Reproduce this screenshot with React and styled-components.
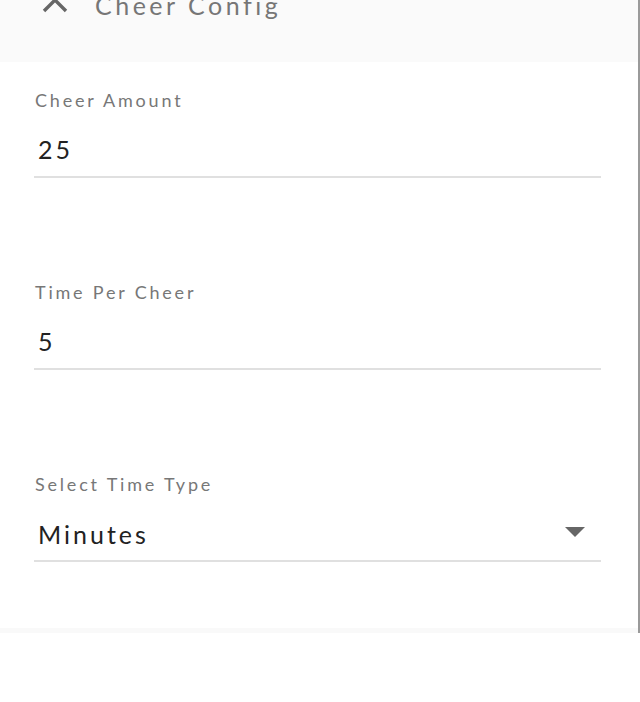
import React from 'react';
import styled, { createGlobalStyle } from 'styled-components';

const GlobalStyle = createGlobalStyle`
    html, body {
        margin: 0;
        padding: 0;
        background: #ffffff;
    }
    body {
        font-family: Lato, "Noto Sans", sans-serif;
        overflow: hidden;
    }
`

const Page = styled.div`
    width: 640px;
    height: 702px;
    background: #ffffff;
`

const Panel = styled.div`
    width: 638px;
    border-right: 2px solid #9a9a9a;
    background: #ffffff;
`

const Header = styled.div`
    height: 62px;
    background: #fafafa;
    overflow: hidden;
`

const HeaderRow = styled.div`
    display: flex;
    align-items: center;
    gap: 27px;
    height: 40px;
    margin-top: -15px;
    padding-left: 42px;
`

const Title = styled.span`
    font-size: 25px;
    letter-spacing: 3.5px;
    color: #767676;
`

const Form = styled.div`
    display: flex;
    flex-direction: column;
    gap: 104px;
    padding: 28px 37px 66px 34px;
`

const Field = styled.div`
    display: flex;
    flex-direction: column;
`

const Label = styled.label`
    font-size: 18px;
    letter-spacing: 2.8px;
    color: #777777;
    line-height: 20px;
    padding-left: 1px;
`

const ValueRow = styled.div`
    display: flex;
    align-items: center;
    justify-content: space-between;
    height: 44px;
    margin-top: 22px;
    padding: 0 4px;
    border-bottom: 2px solid #e0e0e0;
`

const Value = styled.span`
    font-size: 25px;
    letter-spacing: 3px;
    color: #222222;
    padding-bottom: ${p => p.$select ? '8px' : '10px'};
`

const Caret = styled.span`
    width: 0;
    height: 0;
    border-left: 10px solid transparent;
    border-right: 10px solid transparent;
    border-top: 10px solid #666666;
    margin-right: 12px;
    margin-bottom: 12px;
`

const Footer = styled.div`
    height: 5px;
    background: #f9f9f9;
`

function ChevronUp() {
    return (
        <svg width="26" height="16" viewBox="0 0 26 16">
            <path d="M2 14 L13 3 L24 14" fill="none" stroke="#666666" strokeWidth="3.4" />
        </svg>
    )
}

function App() {
    return (
        <Page>
            <GlobalStyle />
            <Panel>
                <Header>
                    <HeaderRow>
                        <ChevronUp />
                        <Title>Cheer Config</Title>
                    </HeaderRow>
                </Header>
                <Form>
                    <Field>
                        <Label>Cheer Amount</Label>
                        <ValueRow>
                            <Value>25</Value>
                        </ValueRow>
                    </Field>
                    <Field>
                        <Label>Time Per Cheer</Label>
                        <ValueRow>
                            <Value>5</Value>
                        </ValueRow>
                    </Field>
                    <Field>
                        <Label>Select Time Type</Label>
                        <ValueRow>
                            <Value $select>Minutes</Value>
                            <Caret />
                        </ValueRow>
                    </Field>
                </Form>
                <Footer />
            </Panel>
        </Page>
    )
}

export default App;
